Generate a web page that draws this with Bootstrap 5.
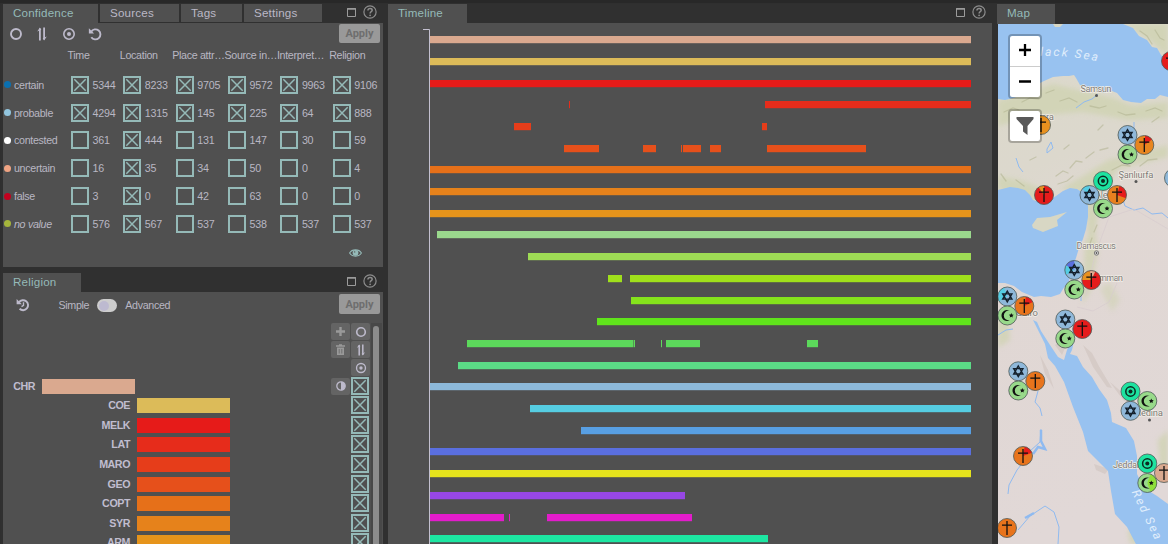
<!DOCTYPE html>
<html lang="en">
<head>
<meta charset="utf-8">
<meta name="viewport" content="width=device-width, initial-scale=1">
<title>Confidence, Religion, Timeline, Map</title>
<link href="https://cdn.jsdelivr.net/npm/bootstrap@5.3.0/dist/css/bootstrap.min.css" rel="stylesheet">
<style>
:root{--pane:#505050;--dark:#303030;--teal:#95bab8;--ink:#bdbacb}
body{background:var(--dark);color:#b9b7c3;font:10.7px/12px "Liberation Sans",Arial,sans-serif;letter-spacing:-.32px;height:544px;overflow:hidden}
.shell{height:544px;padding:4px 0 0 3px;box-shadow:inset 0 3px 1px #282828}
.left-col{width:380px;margin-right:5px}
.mid-col{width:604px;margin-right:5px}
.map-col{width:171px}
.tab-strip{height:19px;gap:2px}
.tab-item{background:var(--pane);font-size:11.6px;letter-spacing:.2px;line-height:18px;height:18px;padding-left:10px;color:#bbb8c6}
.tab-item.active{color:var(--teal);height:19px}
.tools{gap:7px;margin-right:6px;height:17px}
.pane{background:var(--pane)}
.apply-btn{width:41px;height:19px;border-radius:2px;background:#999;color:#6e6e6e;font:700 11px/19px Roboto,sans-serif;letter-spacing:0;padding:0;border:0;margin:1px 3px 0 0}
.cname{width:68px;padding-left:1px;gap:3px;white-space:nowrap}
.dot{width:7px;height:7px;border-radius:50%}
.crow{height:27.8px}
.ccell{width:52.35px;gap:3.5px;letter-spacing:-.2px}
.head-cell{width:52.35px;white-space:nowrap}
.tick{width:18px;height:18px;display:block;flex:none}
.switch-pill{width:20px;height:13px;border-radius:7px;background:#cdcdcd;padding:1.5px}
.switch-pill i{display:block;width:10px;height:10px;border-radius:50%;background:#bdbad0}
.sq{width:19px;height:17px;border-radius:2px;background:#646464;margin-right:1px}
.treerow{height:19.6px;padding-right:2px}
.treelabel{font-weight:700;letter-spacing:-.45px;padding-right:7px;text-align:right;line-height:19px;color:#c0bdcf}
.treebar{width:93px;height:15px;margin-top:2px}
.track{width:11px;background:#484848;padding:3px 0 0 2px;margin-right:1px}
.thumb{width:6px;height:300px;border-radius:3px;background:#8c8c8c}
.mapwrap{margin-left:1px;width:170px;height:520px;letter-spacing:0}
.zoomctl,.filterctl{left:10px;border:2px solid rgba(0,0,0,.24);border-radius:4px;background-clip:padding-box;background-color:#fff;width:34px}
.zoomctl{top:10px;height:65px}.filterctl{top:85px;height:34px}
.zoomctl div{height:30px;padding-bottom:2px}.zoomctl div:first-child{border-bottom:1px solid #ccc;height:31px}
</style>
</head>
<body>
<svg width="0" height="0" class="position-absolute">
<defs>
<symbol id="on" viewBox="0 0 18 18"><path d="M1 1h16v16H1z" fill="none" stroke="#95bab8" stroke-width="2"/><path d="M3.300 3.300l11.400 11.400M14.700 3.300L3.300 14.700" stroke="#95bab8" stroke-width="1.500"/></symbol>
<symbol id="off" viewBox="0 0 18 18"><path d="M1 1h16v16H1z" fill="none" stroke="#95bab8" stroke-width="2"/></symbol>
<symbol id="ring" viewBox="0 0 14 14"><circle cx="7" cy="7" r="5" fill="none" stroke="#bdbacb" stroke-width="1.900"/></symbol>
<symbol id="target" viewBox="0 0 14 14"><circle cx="7" cy="7" r="5.200" fill="none" stroke="#bdbacb" stroke-width="1.600"/><circle cx="7" cy="7" r="2" fill="#bdbacb"/></symbol>
<symbol id="swap" viewBox="0 0 14 14"><path d="M4.900 13.400V1.500M9.100.6v11.900" stroke="#bdbacb" stroke-width="1.800"/><path d="M2.200 4.400L4.900.5l1.400 2.200M11.800 9.600L9.100 13.500l-1.400-2.200" fill="#bdbacb"/></symbol>
<symbol id="undo" viewBox="0 0 14 14"><path d="M3.200 4.700A5 5 0 1 1 3.300 10.200" fill="none" stroke="#bdbacb" stroke-width="1.900"/><path d="M.9 1.200v5.200h5.200z" fill="#bdbacb"/></symbol>
<symbol id="max" viewBox="0 0 9 9"><path d="M.5.5h8v8h-8z" fill="none" stroke="#9b9b9b"/><path d="M0 1h9" stroke="#9b9b9b" stroke-width="1.500"/></symbol>
<symbol id="help" viewBox="0 0 14 14"><circle cx="7" cy="7" r="6.100" fill="none" stroke="#8d8d8d" stroke-width="1.200"/><path d="M4.900 5.500c.1-1.200 1-1.900 2.200-1.900s2.100.7 2.100 1.700c0 1.300-2.100 1.400-2.100 3.100" fill="none" stroke="#8d8d8d" stroke-width="1.500"/><circle cx="7.100" cy="10.300" r=".9" fill="#8d8d8d"/></symbol>
<symbol id="cross" viewBox="-10 -10 20 20" overflow="visible"><path d="M0-7V7M-5-2.900H5" stroke="#111" stroke-width="1.300"/></symbol>
<symbol id="star" viewBox="-10 -10 20 20" overflow="visible"><path d="M0-5.300L4.600 2.650h-9.200zM0 5.300L-4.600-2.650h9.200z" fill="none" stroke="#14202c" stroke-width="1.400"/></symbol>
<symbol id="moon" viewBox="-10 -10 20 20" overflow="visible"><path d="M2.500-4.900A5.600 5.600 0 1 0 2.500 4.900 5 5 0 1 1 2.500-4.900z" fill="#111"/><path d="M4-2.400l.7 1.500 1.700.2-1.200 1.100.3 1.700L4 1.300l-1.500.8.300-1.700L1.600-.7l1.700-.2z" fill="#111"/></symbol>
<symbol id="eye3" viewBox="-10 -10 20 20" overflow="visible"><circle r="4.700" fill="none" stroke="#0b2a20" stroke-width="1.500"/><circle r="2" fill="#0b2a20"/></symbol>
</defs>
</svg>

<main class="shell d-flex">
  <section class="left-col d-flex flex-column flex-shrink-0">
    <div class="tab-strip d-flex">
      <div class="tab-item active" style="width:95px">Confidence</div>
      <div class="tab-item" style="width:79px">Sources</div>
      <div class="tab-item" style="width:61px">Tags</div>
      <div class="tab-item" style="width:78px">Settings</div>
      <div class="tools d-flex align-items-center ms-auto"><svg width="9" height="9"><use href="#max"/></svg><svg width="14" height="14" style="margin-bottom:2px"><use href="#help"/></svg></div>
    </div>
    <div class="pane" style="height:244px">
      <div class="d-flex" style="height:24px">
        <div class="d-flex" style="padding:4px 0 0 5.500px;gap:12.500px"><svg width="14" height="14"><use href="#ring"/></svg><svg width="14" height="14"><use href="#swap"/></svg><svg width="14" height="14"><use href="#target"/></svg><svg width="14" height="14"><use href="#undo"/></svg></div>
        <button class="apply-btn ms-auto">Apply</button>
      </div>
      <div class="d-flex" style="padding:2px 0 0 64.500px;height:24px">
        <div class="head-cell">Time</div><div class="head-cell">Location</div><div class="head-cell">Place attr…</div><div class="head-cell">Source in…</div><div class="head-cell">Interpret…</div><div class="head-cell">Religion</div>
      </div>
      <div id="conf"></div>
      <div class="d-flex justify-content-end" style="padding:10px 21px 0 0"><svg width="13" height="10" viewBox="0 0 13 10"><path d="M.6 5C3 .8 10 .8 12.400 5 10 9.200 3 9.200.6 5z" fill="none" stroke="#95bab8" stroke-width="1.100"/><circle cx="6.500" cy="4.800" r="2.900" fill="#95bab8"/><circle cx="5.700" cy="3.900" r=".7" fill="#505050"/></svg></div>
    </div>
    <div class="tab-strip d-flex" style="margin-top:6px">
      <div class="tab-item active" style="width:78px">Religion</div>
      <div class="tools d-flex align-items-center ms-auto"><svg width="9" height="9"><use href="#max"/></svg><svg width="14" height="14" style="margin-bottom:2px"><use href="#help"/></svg></div>
    </div>
    <div class="pane flex-fill overflow-hidden" style="height:252px">
      <div class="d-flex" style="height:31px">
        <svg width="14" height="14" viewBox="0 0 14 14" style="margin:6px 0 0 13px"><path d="M3 4.300A5 5 0 1 1 3.600 10.800" fill="none" stroke="#bdbacb" stroke-width="1.900"/><path d="M.6.9v5.300h5.300z" fill="#bdbacb"/><path d="M7.500 4.200v3.200l-2 1.200" fill="none" stroke="#bdbacb" stroke-width="1.400"/></svg>
        <div class="d-flex" style="padding:7px 0 0 28.500px;gap:8px"><span>Simple</span><span class="switch-pill"><i></i></span><span>Advanced</span></div>
        <button class="apply-btn ms-auto" style="height:20px;margin-top:2px">Apply</button>
      </div>
      <div class="d-flex">
        <div class="flex-shrink-0" style="width:368px">
          <div class="d-flex flex-column align-items-end" style="height:53.700px;gap:1.200px">
            <div class="d-flex"><div class="sq d-flex justify-content-center align-items-center"><svg width="9" height="9"><path d="M4.500 0v9M0 4.500h9" stroke="#999" stroke-width="2.400"/></svg></div><div class="sq d-flex justify-content-center align-items-center"><svg width="12" height="12"><use href="#ring"/></svg></div></div>
            <div class="d-flex"><div class="sq d-flex justify-content-center align-items-center"><svg width="9" height="11" viewBox="0 0 9 11"><path d="M0 2h9M3 1h3" stroke="#999" stroke-width="1.300"/><path d="M1 3.500h7V11H1z" fill="#999"/><path d="M3.200 5v4.500M5.800 5v4.500" stroke="#646464" stroke-width=".8"/></svg></div><div class="sq d-flex justify-content-center align-items-center"><svg width="12" height="12"><use href="#swap"/></svg></div></div>
            <div class="sq d-flex justify-content-center align-items-center"><svg width="12" height="12"><use href="#target"/></svg></div>
          </div>
          <div id="tree"></div>
        </div>
        <div class="track"><div class="thumb"></div></div>
      </div>
    </div>
  </section>

  <section class="mid-col flex-shrink-0">
    <div class="tab-strip d-flex">
      <div class="tab-item active" style="width:79px">Timeline</div>
      <div class="tools d-flex align-items-center ms-auto"><svg width="9" height="9"><use href="#max"/></svg><svg width="14" height="14" style="margin-bottom:2px"><use href="#help"/></svg></div>
    </div>
    <div class="pane"><svg id="time" class="d-block" width="604" height="521" viewBox="388 23 604 521"><path d="M423 29.500h6.500V544" fill="none" stroke="#c3c0d0"/></svg></div>
  </section>

  <section class="map-col flex-shrink-0">
    <div class="tab-strip d-flex" style="height:20px"><div class="tab-item active" style="width:58px;height:20px">Map</div></div>
    <div class="mapwrap position-relative overflow-hidden">
      <svg class="d-block" width="170" height="520" viewBox="998 24 170 520" font-family="Roboto, sans-serif">
        <defs>
          <linearGradient id="land" x1="0" y1="0" x2="0.150" y2="1"><stop offset="0" stop-color="#dcd9cb"/><stop offset=".3" stop-color="#dcd8cd"/><stop offset=".46" stop-color="#e0d7d3"/><stop offset="1" stop-color="#e1d8d7"/></linearGradient>
          <filter id="soft" x="-30%" y="-30%" width="160%" height="160%"><feGaussianBlur stdDeviation="2.500"/></filter>
        </defs>
        <path d="M998 24h170v520H998z" fill="url(#land)"/>
        <g filter="url(#soft)" fill="#cfd3b0" opacity=".75">
          <path d="M998 101l30-9 25-8 25 6 35 8 20 8 35-4v16l-40 2-45-8-50 4-35 10z"/>
          <path d="M1125 24h43v32l-20-17z"/>
          <path d="M998 176l25 5 30 12 30-17 25-16 60-15v12l-50 12-18 28-6 50-6-2-2-52-25-4-20 9-15 6-28-16z"/>
          <path d="M1085 240l10-10 3 22-8 40-8 12z"/><path d="M1100 288l10-6 10 18-8 12z" opacity=".7"/>
          <path d="M1158 440l10-10v50l-8-8zM1128 530l14-5 3 19h-15zM998 318l10-3 2 25-12 8z"/>
        </g>
        <g fill="none" stroke="#aeb08c" stroke-width="1.300" opacity=".5" stroke-linecap="round">
          <path d="M1004 112l9-4 6 2M1022 102l8-4 9 1M1046 93l8-3M1060 101l9-3 8 4M1090 106l9 2 7-2M1118 112l8 3 9-1M1146 111l9-3 7 3M1140 31l7 5 5 8M1155 30l5 8 4 2"/>
          <path d="M1056 176l7-5 5 2M1070 168l6-7 6 1M1086 158l8-6M1064 149l5-4M1058 184l9-3 6-5M1100 150l8-2M1112 170l10-5 8 1M1140 166l8-6 9-1M1152 122l7-5M1098 130l5-5M1024 186l-8-6M1006 181l-5-7M1030 160l6-3M1094 232l3-7M1089 246l3-8"/>
        </g>
        <g fill="#b8a89e" opacity=".25"><path d="M1083 345l9 8 8 15 12 20-5-1-14-20zM1060 340l5 8-3 7-7-10zM1087 425l-8-9-1-8 9 9zM1110 382l14 12 8 12-9-6zM1094 464l15 5-4 5-9-4zM1040 355l8 15 6 19-9-15z"/></g>
        <g fill="#98c2f0">
          <path d="M998 24h125l10 4 6 8 8 4 5 7 5 1 4 7 7 6v36l-8-2-5 4-8 0-6 4-10-1-8-2-6-7-5-2-8 2-10-6-7 1-7-3-4-7-2-3-5 1-6 0-10 1-9 4-8 4L1020 96l-7 2-8 2-7-1z"/>
          <path d="M998 190l12-3 8 1 7 2 5 5 3 5 9 3 8-3 6-4 7-5 7-3 7 1 6 4 3 6 2 7 0 11-2 12-3 10-4 9-3 10-4 10-3 13-6 8-3 5-9 3-10-1-7 1-12-5-8-6-9-3H998z"/>
          <path d="M1033 320l4 2 4 9 9 14 8 12 6 3 3-10 4-9 2-8 1 8-2 9-2 4 7 2 6 11 9 10 7 12 8 11 4 13 1 9 14 6 8 13 3 15 0 18 7 14 13 8 11 8v44h-30l-11-21-12-13-4-23-3-20-20-20-5-19-10-25-9-25-9-16-7-8-3-14z"/>
        </g>
        <path d="M1053 24h10l-3 3h-5zM1032 225l5-7 13-1 17-5-10 8 1 6-15 6-10-4z" fill="#d8d7c4"/>
        <g fill="none" stroke="#8fbaf0" stroke-width="1">
          <path d="M1047 149l4-7 2 6-6 5zM1016 158l3 9 4 5M1119 188l6 18 9 4 9-2 9 6 10-1 6 5M1098 94l-6 5-8 3-8 6M998 335l8-5 7-1M1134 144v-22"/>
          <path d="M1038 391l-3 11 5 6 2 8M1041 429l-1 13-11 10-4 8-8 10-8 15-1 9M1018 530l12-14 15-10 9 6 5 15-1 17"/>
          <path d="M1041 430v11l4 8-7-2-5 7M1025 518l9-5" stroke-width="2.500"/><path d="M1072 342l2-22M1081 301v-14"/>
        </g>
        <path d="M1086 295l9-40 14-38 25-8 34 20M1077 307l16 4 16-9 8-19" fill="none" stroke="#d7cbcf" stroke-width=".7"/>
        <g font-size="9.500" fill="#7f7b78" stroke="#f1eee7" stroke-width="1.400" paint-order="stroke">
          <text x="1080.500" y="91.500" textLength="31">Samsun</text><text x="1118.500" y="177.500" textLength="35">Şanlıurfa</text><text x="1076.500" y="249" textLength="39.500">Damascus</text><text x="1093" y="280.500" textLength="30">Amman</text><text x="1016" y="316" textLength="22">Cairo</text><text x="1133" y="416" textLength="30">Medina</text><text x="1113" y="468" textLength="29">Jeddah</text><text x="1026" y="120" textLength="28">Ankara</text><text x="1095" y="198" textLength="28">Aleppo</text>
        </g>
        <g fill="#555"><circle cx="1096.500" cy="95.500" r="1.500"/><circle cx="1136" cy="181.500" r="1.500"/><circle cx="1149.500" cy="420" r="1.500"/><circle cx="1096.500" cy="253" r="2.200" fill="#ddd" stroke="#666" stroke-width=".8"/><circle cx="1096.500" cy="253" r=".9"/></g>
        <g fill="#e0eefc" font-style="italic" font-size="12"><path id="bs" d="M1031 56Q1067 54 1110 64" fill="none"/><text letter-spacing="2"><textPath href="#bs">Black Sea</textPath></text><text transform="translate(1131.500 492) rotate(64)" font-size="12" letter-spacing="1.900">Red Sea</text></g>
        <g id="pins"></g>
      </svg>
      <div class="zoomctl position-absolute"><div class="d-flex justify-content-center align-items-center"><svg width="12" height="12"><path d="M6 0v12M0 6h12" stroke="#000" stroke-width="2.300"/></svg></div><div class="d-flex justify-content-center align-items-center"><svg width="12" height="3"><path d="M0 1.500h12" stroke="#000" stroke-width="2.500"/></svg></div></div>
      <div class="filterctl position-absolute d-flex justify-content-center align-items-center"><svg width="18" height="18"><path d="M.5 0h17v2L11.500 9v9L7 14.500V9L.5 2z" fill="#595959"/></svg></div>
    </div>
  </section>
</main>
<script src="https://cdn.jsdelivr.net/npm/bootstrap@5.3.0/dist/js/bootstrap.bundle.min.js"></script>
<script>
const conf=[
 ['certain','#0b70b0',[5344,8233,9705,9572,9963,9106],'111111'],
 ['probable','#92c5de',[4294,1315,145,225,64,888],'111111'],
 ['contested','#fff',[361,444,131,147,30,59],'010000'],
 ['uncertain','#f0a483',[16,35,34,50,0,4],'010000'],
 ['false','#c3021f',[3,0,42,63,0,0],'010000'],
 ['<em>no value</em>','#a5b53c',[576,567,537,538,537,537],'010000']];
document.getElementById('conf').innerHTML=conf.map(([n,c,v,f])=>
 `<div class="crow d-flex align-items-center"><div class="cname d-flex align-items-center flex-shrink-0"><span class="dot" style="background:${c}"></span><span>${n}</span></div>`
 +v.map((x,i)=>`<div class="ccell d-flex align-items-center flex-shrink-0"><svg class="tick"><use href="#${f[i]=='1'?'on':'off'}"/></svg><span>${x}</span></div>`).join('')+'</div>').join('');

const tree=[['CHR','#daa98f'],['COE','#dcbb59'],['MELK','#e61b19'],['LAT','#e62c1b'],['MARO','#e63d1a'],['GEO','#e6501b'],['COPT','#e67019'],['SYR','#e6821b'],['ARM','#e6941b']];
document.getElementById('tree').innerHTML=tree.map(([n,c],i)=>
 `<div class="treerow d-flex"><div class="treelabel" style="width:${i?134:39}px">${n}</div><div class="treebar" style="background:${c}"></div><div class="ms-auto d-flex">${i?'':'<div class="sq d-flex justify-content-center align-items-center" style="margin-top:1px"><svg width="10" height="10"><circle cx="5" cy="5" r="4.200" fill="none" stroke="#bdbacb" stroke-width="1.300"/><path d="M5 .8a4.200 4.200 0 0 1 0 8.400z" fill="#bdbacb"/></svg></div>'}<svg class="tick"><use href="#on"/></svg></div></div>`).join('');

const E=971,S=430;
const rows=[['#daa98f',S,E],['#dcbb59',S,E],['#e61b19',S,E],['#e62c1b',569,570,765,E],['#e63d1a',514,531,762,767],['#e6501b',564,599,643,656,681,682,683,701,710,721,767,866],
['#e67019',S,E],['#e6821b',S,E],['#e6941b',S,E],['#9ad98d',437,E],['#9edb55',528,E],['#a0e01c',608,622,630,E],['#85e31c',631,E],['#60e31c',597,E],['#5cd95b',467,633.5,634,635,661,662,666,700,807,818],
['#5bdb86',458,E],['#8db9da',S,E],['#56cde2',530,E],['#589fe3',581,E],['#5a6fdf',S,E],['#e5e31c',S,E],['#9747e5',S,685],['#e31ccb',S,504,509,510,547,692],['#1de6a2',S,768]];
document.getElementById('time').innerHTML+=rows.map(([c,...v],i)=>{let o='';for(let k=0;k<v.length;k+=2)o+=`<rect x="${v[k]}" y="${Math.round(36.1+21.7*i)}" width="${v[k+1]-v[k]}" height="7.200" fill="${c}"/>`;return o}).join('');

const B='#8fb8da',G='#98d98a',O='#e8741c',A='#e8911f',R='#e61c1c',T='#1de3a0';
const pins=[['cross',1041,125,A],['star',1127.5,135,B],['cross',1144.3,145,'#e8861f',R,5,55],['moon',1127.5,154.5,G],['cross',1171,61,R],['star',1174,178,B],
['cross',1044,195,R,A,-35,0],['star',1089.5,195,B,'#55cde3',-50,0],['cross',1117,195,'#e8801f',R,15,110],['moon',1103,208.5,G],['eye3',1103,181,T],
['star',1074.3,270,B,'#55cde3',-120,-60,'#5a6fdf',-60,0],['cross',1091.3,280,R,A,-90,-10,'#daa98f',-10,25],['moon',1074.3,289.5,G],
['star',1007.3,296.5,B,'#55cde3',-120,-20],['cross',1024.3,306,O,R,10,65],['moon',1007.3,315.5,G],
['star',1065.3,319.5,B],['cross',1082.3,329,R],['moon',1065.3,338.5,G],
['star',1018.3,371.3,B],['cross',1035.3,381,O],['moon',1018.3,390.5,G],
['moon',1147.3,401,G],['star',1130.5,410.8,B],['eye3',1130.5,391.5,T],['cross',1164,473,'#daa98f'],['eye3',1147.3,463.5,T],['moon',1147.3,483,G,'#8fe03a',20,160],
['cross',1023,456,O,R,10,70],['cross',1007,528,O]];
const pt=a=>{a*=Math.PI/180;return (9.5*Math.sin(a)).toFixed(2)+' '+(-9.5*Math.cos(a)).toFixed(2)};
document.getElementById('pins').innerHTML=pins.map(([k,x,y,c,...w])=>{let o='';for(let i=0;i<w.length;i+=3)o+=`<path d="M0 0L${pt(w[i+1])}A9.5 9.5 0 0 1 ${pt(w[i+2])}z" fill="${w[i]}"/>`;
return `<g transform="translate(${x} ${y})"><circle r="9.500" fill="${c}"/>${o}<circle r="9.500" fill="none" stroke="#4d5a58" stroke-opacity=".8" stroke-width="1"/><use href="#${k}" x="-10" y="-10" width="20" height="20"/></g>`}).join('');
</script>
</body>
</html>
